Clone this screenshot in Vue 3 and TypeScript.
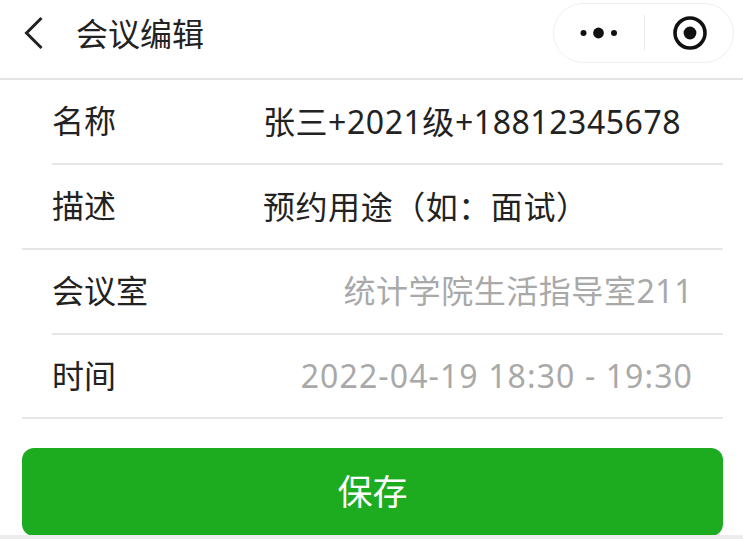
<script setup lang="ts">
interface FormRow {
  label: string
  value: string
  placeholder?: boolean
  inset?: boolean
  time?: boolean
}

const rows: FormRow[] = [
  { label: '名称', value: '张三+2021级+18812345678', inset: true },
  { label: '描述', value: '预约用途（如：面试）', inset: false },
  { label: '会议室', value: '统计学院生活指导室211', placeholder: true, inset: true },
  { label: '时间', value: '2022-04-19 18:30 - 19:30', placeholder: true, time: true },
]
</script>

<template>
  <div class="page">
    <header class="nav">
      <svg class="back" viewBox="0 0 24 36" width="24" height="36">
        <path d="M19.5 3 L4.5 18 L19.5 33" fill="none" stroke="#222" stroke-width="3" />
      </svg>
      <span class="nav-title">会议编辑</span>
      <div class="capsule">
        <svg class="dots" viewBox="0 0 38 12" width="38" height="12">
          <circle cx="3.5" cy="6" r="3" fill="#111" />
          <circle cx="18.5" cy="6" r="5.4" fill="#111" />
          <circle cx="34" cy="6" r="3" fill="#111" />
        </svg>
        <span class="capsule-sep"></span>
        <svg class="target" viewBox="0 0 36 36" width="36" height="36">
          <circle cx="18" cy="18" r="15" fill="none" stroke="#111" stroke-width="3.6" />
          <circle cx="18" cy="18" r="6.4" fill="#111" />
        </svg>
      </div>
    </header>

    <section class="form">
      <div v-for="row in rows" :key="row.label" class="row" :class="{ inset: row.inset }">
        <span class="label">{{ row.label }}</span>
        <span class="value" :class="{ placeholder: row.placeholder, time: row.time }">{{ row.value }}</span>
      </div>
    </section>

    <div class="actions">
      <button class="save" type="button">保存</button>
    </div>
  </div>
</template>

<style>
html,
body {
  margin: 0;
  background: #fff;
}
</style>

<style scoped>
.page {
  width: 743px;
  height: 539px;
  overflow: hidden;
  box-sizing: border-box;
  border-bottom: 4px solid #ececec;
  font-family: "Noto Sans", "Noto Sans CJK SC", sans-serif;
  color: #222;
}

.nav {
  display: flex;
  align-items: center;
  height: 80px;
  box-sizing: border-box;
  padding: 0 9px 12px 22px;
  border-bottom: 2px solid #e4e4e4;
}

.nav-title {
  margin: 2px 0 0 30px;
  font-size: 32px;
  line-height: 40px;
}

.capsule {
  display: flex;
  align-items: center;
  box-sizing: border-box;
  width: 181px;
  height: 60px;
  margin-left: auto;
  padding-left: 26px;
  border: 1px solid #efefef;
  border-radius: 30px;
}

.capsule-sep {
  width: 1px;
  height: 36px;
  margin-left: 26px;
  background: #ececec;
}

.target {
  margin-left: 27px;
}

.form {
  padding: 0 20px 0 22px;
}

.row {
  display: flex;
  align-items: center;
  height: 85px;
  box-sizing: border-box;
  padding: 0 30px 1px;
  border-bottom: 2px solid #e6e6e6;
  line-height: 40px;
}

.row:last-child {
  height: 84px;
}

.row.inset {
  margin-left: 30px;
  padding-left: 0;
}

.label {
  flex: 0 0 211px;
  font-size: 32px;
}

.value {
  flex: 1;
  margin-top: 2px;
  font-size: 32px;
  letter-spacing: 0.55px;
  white-space: nowrap;
}

.value.placeholder {
  margin-top: 0;
  color: #a9a9a9;
  text-align: right;
}

.value.time {
  letter-spacing: 1.1px;
}

.actions {
  padding: 29px 20px 0 22px;
}

.save {
  display: block;
  width: 100%;
  height: 88px;
  padding: 0 0 6px;
  border: 0;
  border-radius: 12px;
  background: #1dab1f;
  color: #fff;
  font: inherit;
  font-size: 35px;
}
</style>
